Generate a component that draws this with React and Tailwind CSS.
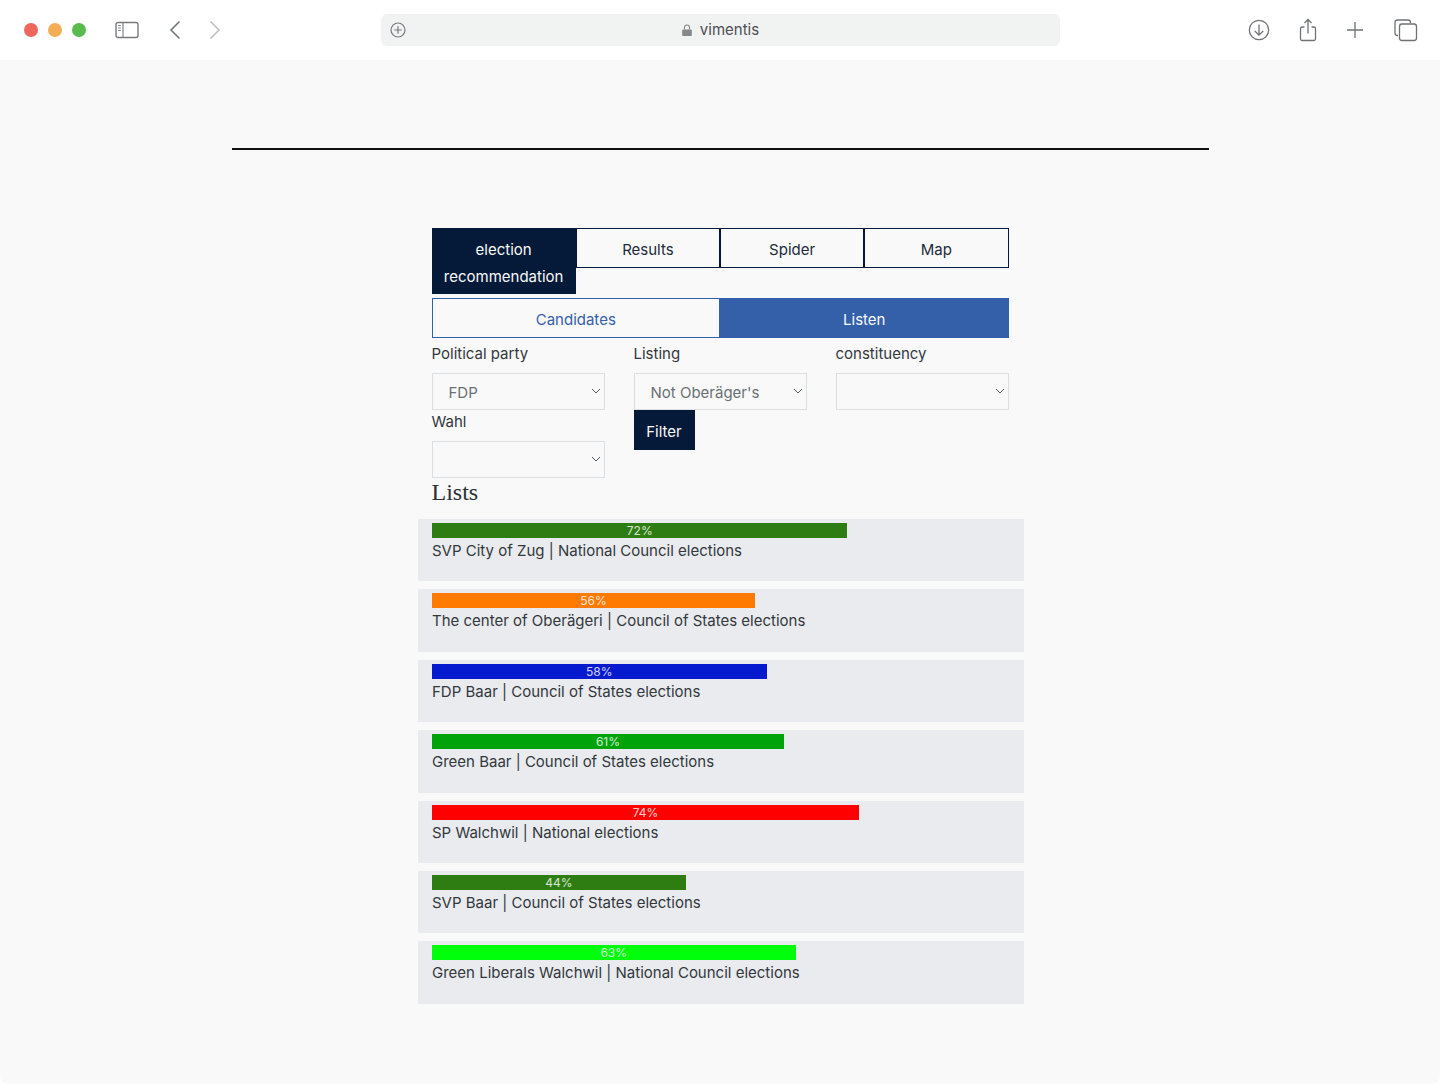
import React from "react";

const lists = [
  { label: "SVP City of Zug | National Council elections", value: 72, color: "bg-[#2e7d12]" },
  { label: "The center of Oberägeri | Council of States elections", value: 56, color: "bg-[#ff7a00]" },
  { label: "FDP Baar | Council of States elections", value: 58, color: "bg-[#0519cf]" },
  { label: "Green Baar | Council of States elections", value: 61, color: "bg-[#00a30a]" },
  { label: "SP Walchwil | National elections", value: 74, color: "bg-[#ff0000]" },
  { label: "SVP Baar | Council of States elections", value: 44, color: "bg-[#2e7d12]" },
  { label: "Green Liberals Walchwil | National Council elections", value: 63, color: "bg-[#00ff0a]" },
];

const Select = ({ value }) => (
  <div className="relative h-[37px] w-full">
    <select
      defaultValue={value}
      className="h-full w-full appearance-none border border-[#dcdfe2] bg-transparent pl-4 pt-[3px] text-[15px] text-[#6b7075] outline-none"
    >
      <option>{value}</option>
    </select>
    <svg className="pointer-events-none absolute right-[4px] top-[14px] h-2 w-[10px]" viewBox="0 0 10 8" fill="none" stroke="#555a60" strokeWidth="1">
      <path d="M1 2l4 4 4-4" />
    </svg>
  </div>
);

const Field = ({ label, value }) => (
  <div>
    <div className="mb-[7px] h-6 leading-6 text-[#33383d]">{label}</div>
    <Select value={value} />
  </div>
);

const Toolbar = () => (
  <div className="flex h-[60px] items-center bg-white">
    <div className="ml-6 flex gap-[10px]">
      <div className="h-[14px] w-[14px] rounded-full bg-[#ee675c]" />
      <div className="h-[14px] w-[14px] rounded-full bg-[#f5ad57]" />
      <div className="h-[14px] w-[14px] rounded-full bg-[#5abb4d]" />
    </div>
    <svg className="ml-[29px] h-[18px] w-6" viewBox="0 0 24 18" fill="none" stroke="#77797c" strokeWidth="1.4">
      <rect x="1" y="1.5" width="22" height="15" rx="2" />
      <path d="M8 1.5v15M3.2 4.5h2.6M3.2 7h2.6M3.2 9.500h2.600" strokeWidth="1.100" />
    </svg>
    <svg className="ml-[30px] h-5 w-3" viewBox="0 0 12 20" fill="none" stroke="#6f7175" strokeWidth="1.500">
      <path d="M10.500 1.500L2 10l8.500 8.500" />
    </svg>
    <svg className="ml-[28px] h-5 w-3" viewBox="0 0 12 20" fill="none" stroke="#bcbec1" strokeWidth="1.500">
      <path d="M1.500 1.500L10 10l-8.500 8.500" />
    </svg>
    <div className="relative ml-[160px] flex h-8 w-[679px] items-center justify-center rounded-md bg-[#f1f2f2] pr-[5px]">
      <svg className="absolute left-[9px] top-[8px] h-4 w-4" viewBox="0 0 16 16" fill="none" stroke="#77797c" strokeWidth="1.200">
        <circle cx="8" cy="8" r="7" />
        <path d="M8 4.300v7.400M4.300 8h7.400" />
      </svg>
      <svg className="mr-[8px] ml-[5px] h-3 w-[10px]" viewBox="0 0 10 12" fill="#85878a">
        <path d="M1 5.500h8a.8.8 0 0 1 .8.8v4.900a.8.8 0 0 1-.8.8H1a.8.8 0 0 1-.8-.8V6.300A.8.8 0 0 1 1 5.500z" />
        <path d="M2.500 5.500V3.500a2.500 2.500 0 0 1 5 0v2" fill="none" stroke="#85878a" strokeWidth="1.100" />
      </svg>
      <span className="text-[15px] text-[#4d4f52]">vimentis</span>
    </div>
    <svg className="ml-[188px] h-[22px] w-[22px]" viewBox="0 0 22 22" fill="none" stroke="#707276" strokeWidth="1.300">
      <circle cx="11" cy="11" r="9.700" />
      <path d="M11 5.500v10.500M6.800 12l4.200 4.200 4.200-4.200" />
    </svg>
    <svg className="ml-[29px] h-6 w-[18px]" viewBox="0 0 18 24" fill="none" stroke="#707276" strokeWidth="1.300">
      <path d="M5.500 9H3a1.500 1.500 0 0 0-1.500 1.500v10.500A1.500 1.500 0 0 0 3 22.500h12a1.500 1.500 0 0 0 1.500-1.500V10.500A1.500 1.500 0 0 0 15 9h-2.500" />
      <path d="M9 15.500V1.500M5.500 5L9 1.500 12.500 5" />
    </svg>
    <svg className="ml-[29px] h-[18px] w-[18px]" viewBox="0 0 18 18" fill="none" stroke="#707276" strokeWidth="1.300">
      <path d="M9 1v16M1 9h16" />
    </svg>
    <svg className="ml-[30px] h-6 w-6" viewBox="0 0 24 24" fill="none" stroke="#707276" strokeWidth="1.300">
      <path d="M4 17.500h-.5A2.500 2.500 0 0 1 1 15V4.500A2.500 2.500 0 0 1 3.500 2H14a2.500 2.500 0 0 1 2.500 2.500V5" />
      <rect x="5.500" y="6" width="17" height="16.500" rx="2.500" />
    </svg>
  </div>
);

export default function App() {
  return (
    <div className="min-h-[1084px] bg-white font-['Inter','Liberation_Sans',sans-serif] text-[15px] text-[#212529]">
      <Toolbar />
      <div className="flex h-[1024px] flex-col items-center rounded-b-lg bg-[#f9f9f9] pt-[88px]">
        <div className="ml-[1px] h-[2px] w-[977px] bg-[#111]" />

        <div className="mt-[78px] w-[577px]">
          <div className="flex items-start">
            <button className="h-[66px] w-[144.25px] border border-[#051a38] bg-[#051a38] pt-1 leading-[27px] text-[#f8f9fa]">
              election
              <br />
              recommendation
            </button>
            <button className="h-10 w-[144.25px] border border-[#051a38] pt-[4px] text-[#212b3a]">Results</button>
            <button className="h-10 w-[144.25px] border border-[#051a38] pt-[4px] text-[#212b3a]">Spider</button>
            <button className="h-10 w-[144.25px] border border-[#051a38] pt-[4px] text-[#212b3a]">Map</button>
          </div>

          <div className="mt-1 flex">
            <button className="h-10 w-1/2 border border-[#3460a9] pt-[4px] text-[#3460a9]">Candidates</button>
            <button className="h-10 w-1/2 border border-[#3460a9] bg-[#3460a9] pt-[4px] text-[#f8f9fa]">Listen</button>
          </div>

          <div className="mt-1 grid grid-cols-[173px_173px_173px] gap-x-[29px]">
            <Field label="Political party" value="FDP" />
            <Field label="Listing" value="Not Oberäger's" />
            <Field label="constituency" value="" />
            <Field label="Wahl" value="" />
            <div>
              <button className="h-10 w-[61px] bg-[#051a38] pt-1 text-[#f8f9fa]">Filter</button>
            </div>
          </div>

          <h2 className="mt-[1px] font-['Liberation_Serif',serif] text-[24px] leading-[26px] text-[#2b3035]">Lists</h2>
        </div>

        <div className="mt-[14px] ml-[2px] flex w-[606px] flex-col gap-2">
          {lists.map((item) => (
            <div key={item.label} className="h-[62.4px] bg-[#e9ebee] pl-[14px] pr-[15px] pt-1">
              <div
                className={`h-[15px] text-center text-[12px] leading-[16px] text-white/80 ${item.color}`}
                style={{ width: `${item.value}%` }}
              >
                {item.value}%
              </div>
              <div className="mt-[1px] leading-6 text-[#33383d]">{item.label}</div>
            </div>
          ))}
        </div>
      </div>
    </div>
  );
}
